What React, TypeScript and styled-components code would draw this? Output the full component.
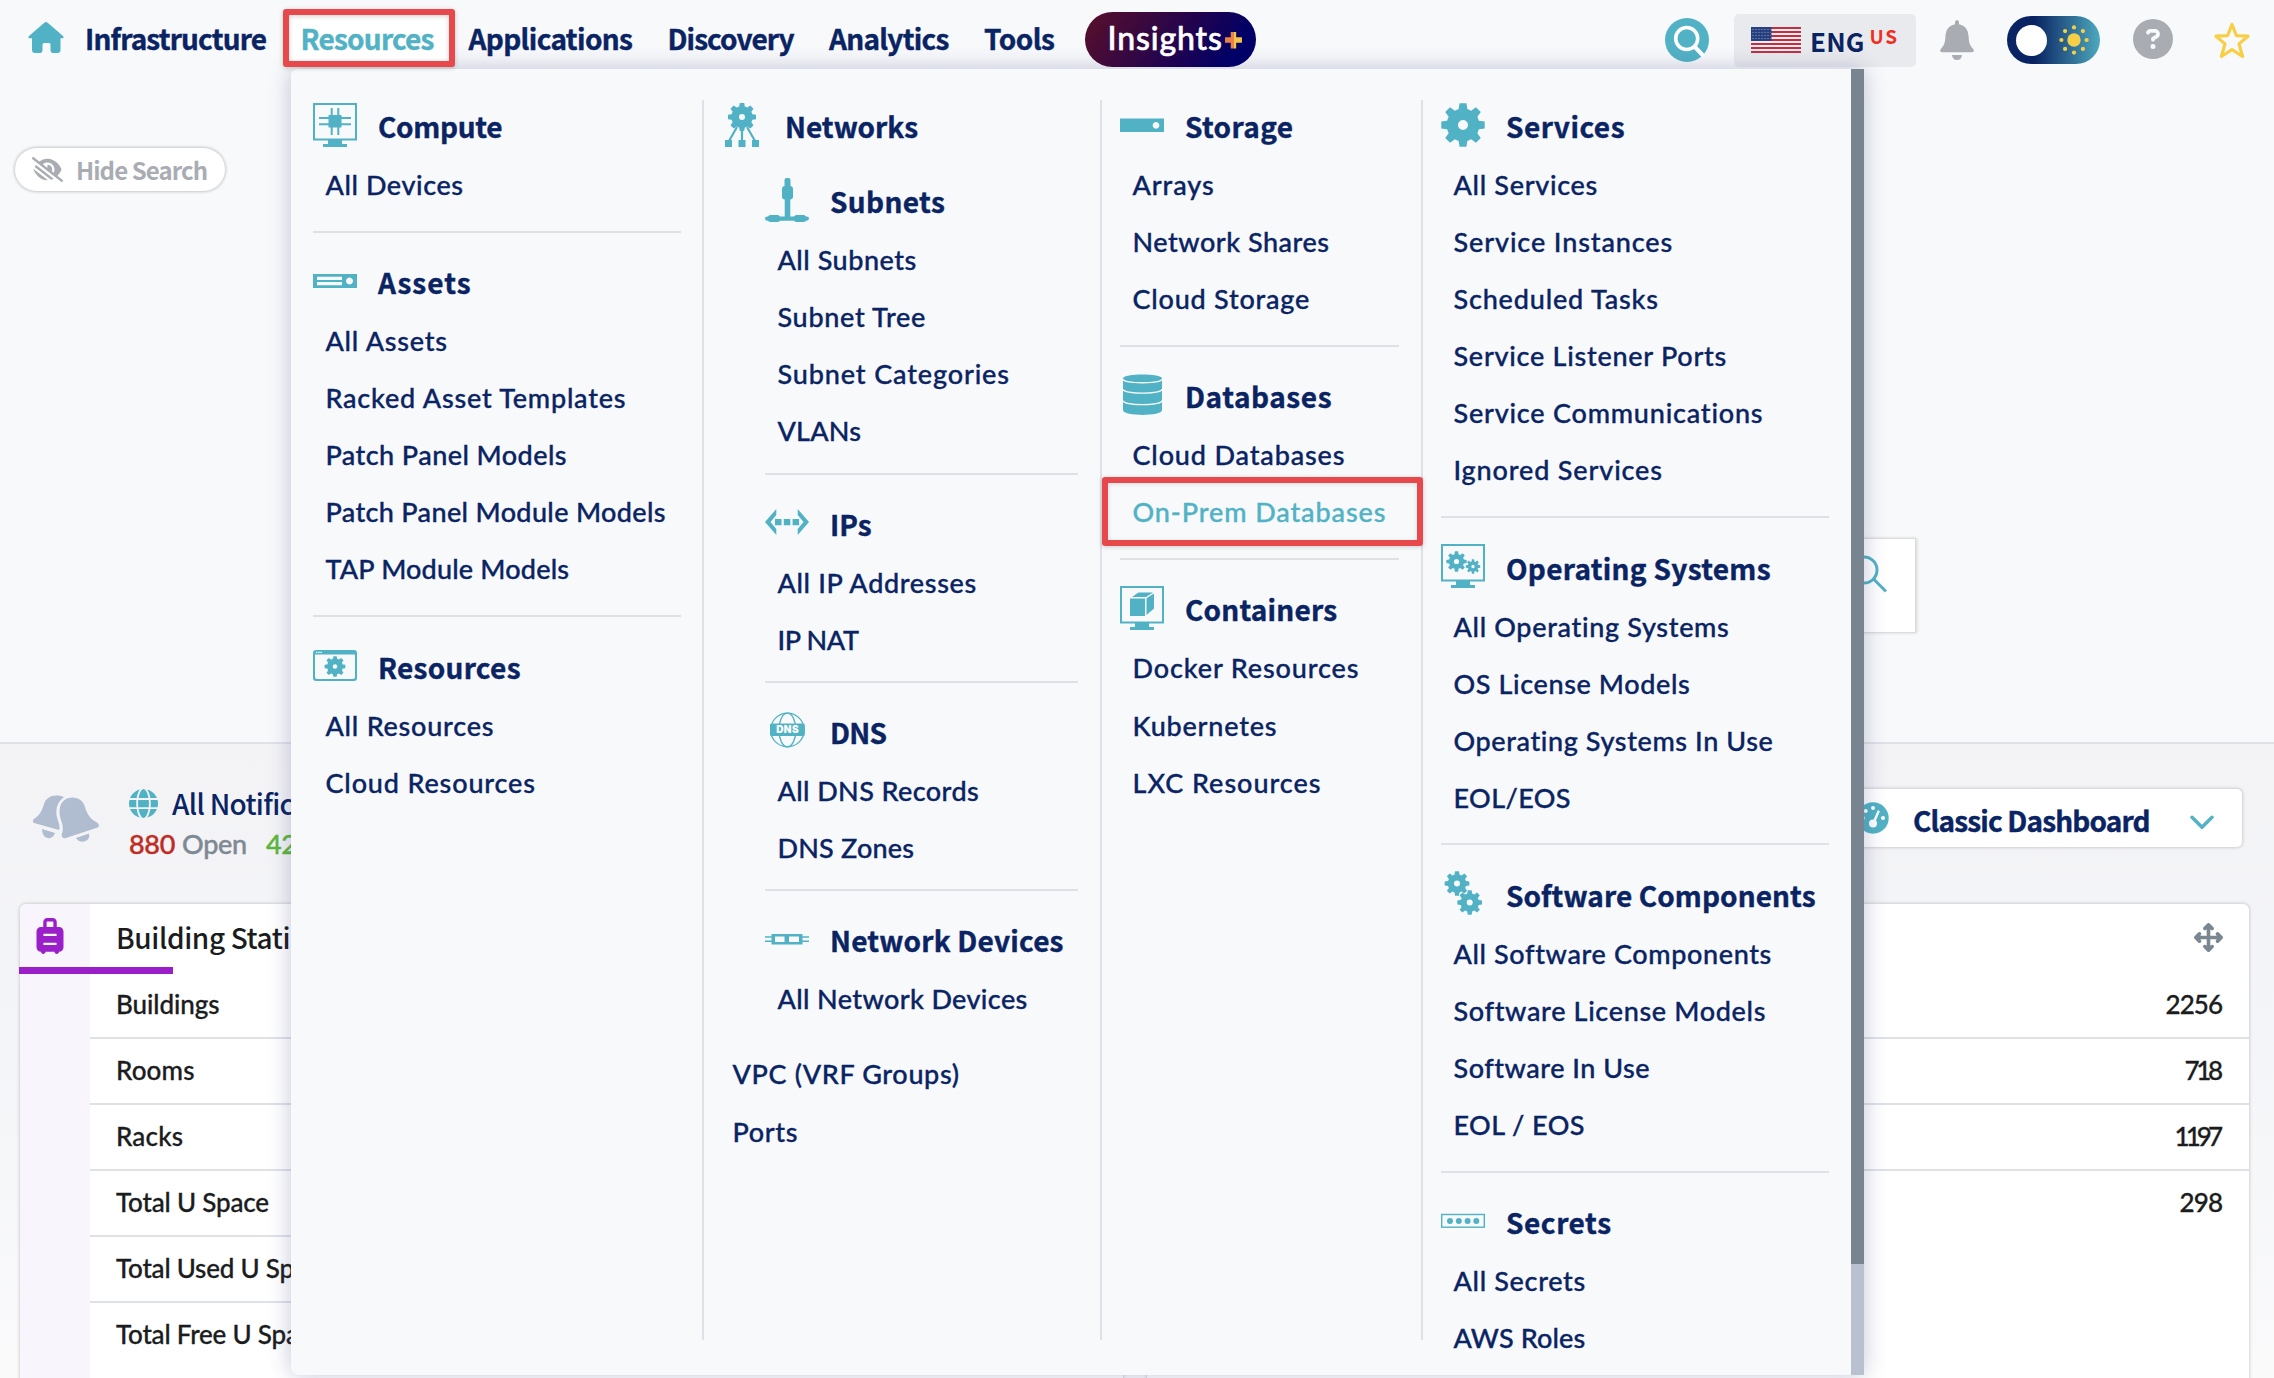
import React, { useLayoutEffect, useRef, useState } from "react";
import styled, { createGlobalStyle } from "styled-components";
import {
  FaArrowsUpDownLeftRight,
  FaCircleQuestion,
  FaEyeLowVision,
  FaGlobe,
  FaSuitcaseRolling,
} from "react-icons/fa6";

const teal = "#52b2c5";
const navy = "#0a2463";
const line = "#dfe1e7";
const ink = "#1b1c1e";
const display = `"Noto Sans CJK SC", "Noto Sans", sans-serif`;
const body = `Lato, "Open Sans", sans-serif`;

const GlobalStyle = createGlobalStyle`
  * { box-sizing: border-box; }
  body { margin: 0; background: #f8f9fb; font-family: ${body}; color: ${ink}; overflow: hidden; }
  svg { display: block; flex: none; }
`;

/* ---------- text that tracks out to a given measure ---------- */

const Run = styled.span`
  display: inline-block;
  white-space: pre;
`;

function Tracked({ text, w }: { text: string; w: number }) {
  const ref = useRef<HTMLSpanElement>(null);
  const [gap, setGap] = useState(0);
  useLayoutEffect(() => {
    const el = ref.current;
    if (!el) return;
    el.style.letterSpacing = "0px";
    const natural = el.getBoundingClientRect().width;
    const next = (w + 1.5 - natural) / Math.max(1, text.length - 1);
    el.style.letterSpacing = next + "px";
    setGap(next);
  }, [text, w]);
  return (
    <Run ref={ref} style={{ letterSpacing: gap, marginRight: -gap }}>
      {text}
    </Run>
  );
}

/* ---------- drawings ---------- */

function gearPath(cx: number, cy: number, ro: number, ri: number, hole: number, teeth = 8) {
  const step = (Math.PI * 2) / teeth;
  const pts: string[] = [];
  for (let i = 0; i < teeth; i++) {
    const a = i * step - Math.PI / 2;
    [
      [ri, -0.34],
      [ro, -0.2],
      [ro, 0.2],
      [ri, 0.34],
    ].forEach(([r, o]) => {
      const t = a + o * step;
      pts.push(`${(cx + r * Math.cos(t)).toFixed(2)} ${(cy + r * Math.sin(t)).toFixed(2)}`);
    });
  }
  return `M${pts.join("L")}Z M${cx - hole} ${cy}a${hole} ${hole} 0 1 0 ${hole * 2} 0a${hole} ${hole} 0 1 0 ${-hole * 2} 0Z`;
}

const Glyph = ({ children }: { children: React.ReactNode }) => (
  <svg width="44" height="44" viewBox="0 0 44 44" fill={teal}>
    {children}
  </svg>
);

const Monitor = () => (
  <>
    <rect x="1" y="1" width="42" height="35.5" fill="none" stroke={teal} strokeWidth="2" />
    <path d="M15 37h14v4h5v3H10v-3h5z" />
  </>
);

const icons: Record<string, React.ReactNode> = {
  compute: (
    <Glyph>
      <Monitor />
      <rect x="15.5" y="12" width="13" height="12.5" />
      <path d="M18.7 5v27M25.3 5v27M6 15h32M6 21.2h32" stroke={teal} strokeWidth="2" />
    </Glyph>
  ),
  assets: (
    <Glyph>
      <path fillRule="evenodd" d="M0 15h44v14H0z M4 17.8v3.2h25v-3.2z M4 23v3.2h25V23z M36.5 18.5a3.5 3.5 0 1 0 .01 0z" />
    </Glyph>
  ),
  resources: (
    <Glyph>
      <path fillRule="evenodd" d="M3 7h38q3 0 3 3v25q0 3-3 3H3q-3 0-3-3V10q0-3 3-3z M2 11.5V34q0 2 2 2h36q2 0 2-2V11.5z" />
      <path d="M3 9.3h6" stroke="#fff" strokeWidth="1.2" strokeDasharray="1.4 .8" />
      <path fillRule="evenodd" d={gearPath(22, 23.5, 10.5, 8, 2.3)} />
    </Glyph>
  ),
  networks: (
    <Glyph>
      <path fillRule="evenodd" d={gearPath(22, 14, 14.2, 10.8, 3)} />
      <path d="M17 24L9 38M22 25v13M27 24l8 14" stroke={teal} strokeWidth="2.2" />
      <path d="M5 37h7v7H5zM18.5 37h7v7h-7zM32 37h7v7h-7z" />
    </Glyph>
  ),
  subnets: (
    <Glyph>
      <rect x="19.5" y="0" width="6" height="12" rx="2" />
      <rect x="17" y="8" width="11" height="13.5" rx="3" />
      <rect x="19.7" y="18" width="5.6" height="22" />
      <rect x="0" y="38.5" width="44" height="4.2" rx="2.1" />
      <rect x="3" y="37" width="12" height="7" rx="2.5" />
      <rect x="29" y="37" width="12" height="7" rx="2.5" />
    </Glyph>
  ),
  ips: (
    <Glyph>
      <path d="M11.3 9v6L5.5 22l5.800 7v6L0 22z M32.7 9v6l5.800 7-5.800 7v6L44 22z" />
      <path d="M10 19h6.500v6.300H10zM18.800 19h6.500v6.300h-6.500zM27.600 19h6.500v6.300h-6.500z" />
    </Glyph>
  ),
  dns: (
    <Glyph>
      <g fill="none" stroke={teal} strokeWidth="1.3">
        <circle cx="22.4" cy="22" r="16.8" />
        <ellipse cx="22.4" cy="22" rx="8.5" ry="16.8" />
      </g>
      <rect x="5" y="15.5" width="34.8" height="12.5" rx="1.5" />
      <text x="22.6" y="25.4" textAnchor="middle" fontFamily="Inter, sans-serif" fontSize="10" fontWeight="900" letterSpacing=".4" fill="#fff">
        DNS
      </text>
    </Glyph>
  ),
  devices: (
    <Glyph>
      <path fillRule="evenodd" d="M6.500 17h31v10.500h-31z M10 19.500v5.500h9.500v-5.500z M24 19.500v5.500h10v-5.500z" />
      <path d="M0 20h7M0 24.200h7M37 20h7M37 24.200h7" stroke={teal} strokeWidth="1.5" />
    </Glyph>
  ),
  storage: (
    <Glyph>
      <path fillRule="evenodd" d="M0 15.500h44v13.500H0z M36 19a3.400 3.400 0 1 0 .01 0z" />
    </Glyph>
  ),
  databases: (
    <Glyph>
      <path d="M3 5.500C3 .3 42 .3 42 5.500V37c0 6.500-39 6.500-39 0z" />
      <g fill="none" stroke="#f8f9fb" strokeWidth="1.3">
        <path d="M3 6c0 5 39 5 39 0M3 16c0 5.500 39 5.500 39 0M3 27.500c0 5.500 39 5.500 39 0" />
      </g>
    </Glyph>
  ),
  containers: (
    <Glyph>
      <Monitor />
      <path d="M10 12.500h15v17.500H10zM12 11l6.500-4.500H33L26 11zM26.500 12.300L34 7.500v15L26.500 29z" />
    </Glyph>
  ),
  services: (
    <Glyph>
      <path fillRule="evenodd" d={gearPath(22, 22, 22, 16.5, 5)} />
    </Glyph>
  ),
  os: (
    <Glyph>
      <Monitor />
      <path fillRule="evenodd" d={gearPath(15.5, 17.5, 10.3, 7.6, 2.6)} />
      <path fillRule="evenodd" d={gearPath(32, 22.5, 7.3, 5.3, 1.7)} />
    </Glyph>
  ),
  software: (
    <Glyph>
      <path fillRule="evenodd" d={gearPath(16, 12.5, 12.5, 9.3, 3)} />
      <path fillRule="evenodd" d={gearPath(28.7, 31.5, 12.5, 9.3, 3)} />
    </Glyph>
  ),
  secrets: (
    <Glyph>
      <rect x=".7" y="15.5" width="42.6" height="12.7" fill="none" stroke={teal} strokeWidth="1.4" />
      <circle cx="9" cy="22" r="3" />
      <circle cx="17.8" cy="22" r="3" />
      <circle cx="26.6" cy="22" r="3" />
      <circle cx="35.3" cy="22" r="3" />
    </Glyph>
  ),
};

const HomeIcon = () => (
  <svg width="36" height="31" viewBox="0 0 36 31" fill={teal}>
    <path d="M16.300.7q1.700-1.200 3.400 0L35 14q1.500 2.300-1 2.300h-1.500V28q0 3-3 3H25q-2.500 0-2.500-3v-5.500q0-1.500-1.500-1.500h-5q-1.500 0-1.500 1.500V28q0 3-2.500 3H7q-3 0-3-3V16.300H2Q-.5 16.300 1 14z" />
  </svg>
);

const SearchBadge = () => (
  <svg width="44" height="44" viewBox="0 0 44 44">
    <circle cx="22" cy="22" r="22" fill={teal} />
    <circle cx="21.7" cy="20.5" r="11" fill="none" stroke="#fff" strokeWidth="3.6" />
    <path d="M29.500 28.500L38.500 38" stroke="#fff" strokeWidth="4" />
  </svg>
);

const Flag = () => (
  <svg width="50" height="26" viewBox="0 0 50 26">
    <rect width="50" height="26" fill="#f7e9ec" />
    {[0, 1, 2, 3, 4, 5, 6].map((i) => (
      <rect key={i} y={i * 4} width="50" height="2" fill="#bd3145" />
    ))}
    <rect width="20.5" height="14" fill="#27407f" />
    {[2, 5, 8, 11].map((y) => (
      <path key={y} d={`M1.5 ${y + 0.5}H20`} stroke="#8d9cc4" strokeWidth="1" strokeDasharray="1 2" />
    ))}
  </svg>
);

const BellIcon = () => (
  <svg width="34" height="40" viewBox="0 0 34 40" fill="#a9adb3">
    <path d="M17 0q2 0 2 2.500v1.700c7 1.300 9.300 6.500 9.600 12.500.3 6 1.400 9 4.600 12.300 1.300 2 .6 3.300-1.200 3.300H2c-1.800 0-2.500-1.300-1.200-3.300 3.200-3.300 4.300-6.300 4.600-12.300C5.700 10.700 8 5.500 15 4.200V2.500Q15 0 17 0z" />
    <path d="M12 35h10q-.5 5-5 5t-5-5z" />
  </svg>
);

const Sun = () => (
  <svg width="30" height="30" viewBox="0 0 30 30" fill="#f7cf46">
    <circle cx="15" cy="15" r="6.7" />
    {[0, 1, 2, 3, 4, 5, 6, 7].map((i) => (
      <circle
        key={i}
        cx={15 + 12.6 * Math.cos((i * Math.PI) / 4)}
        cy={15 + 12.6 * Math.sin((i * Math.PI) / 4)}
        r="2.1"
      />
    ))}
  </svg>
);

const StarIcon = () => (
  <svg width="36" height="37" viewBox="0 0 36 37" fill="none" stroke="#f7cf46" strokeWidth="3.2" strokeLinejoin="round">
    <path d="M18 2.500l4.400 11.200 11.600.5-9 7.700 3.600 12.600L18 27.600 7.400 34.500 11 21.900l-9-7.700 11.600-.5z" />
  </svg>
);

const BellsIcon = () => (
  <svg width="66" height="48" viewBox="0 0 66 48" fill="#b0bdd1">
    <path d="M31 2C21-1.500 13.500 1.500 11 9 8.500 17 6.500 20 1.500 23.500c-2.300 2-2 4 .3 4.700L26 35c2-4-1.500-9-2.500-15C22.700 12 25.500 6 31 2z" />
    <path d="M34 3.500C42 .5 50 4 52 12c2.500 8.500 6 12.500 12 15.500 2.500 1.700 2.500 4.500 0 5.300L33 43c-3 .8-5-.7-4.200-4 1.700-5 1.200-8-.8-14-3-9-1.500-18 6-21.500z" />
    <path d="M9 34l13 4q-2 6-7.500 5Q9 41.500 9 34zM43 43l13-4.500q1.500 5.500-4 7.700Q46 48 43 43z" />
  </svg>
);

const GaugeIcon = () => (
  <svg width="32" height="32" viewBox="0 0 32 32">
    <circle cx="16" cy="16" r="15.7" fill={teal} />
    <g fill="#fff">
      <circle cx="16" cy="6" r="2" />
      <circle cx="8.8" cy="9" r="2" />
      <circle cx="5.8" cy="16" r="2" />
      <circle cx="26" cy="16" r="2" />
      <circle cx="16" cy="21.5" r="4" />
    </g>
    <path d="M16.500 21L21.500 9.500" stroke="#fff" strokeWidth="2.4" strokeLinecap="round" />
  </svg>
);

const ChevronIcon = () => (
  <svg width="24" height="15" viewBox="0 0 24 15" fill="none" stroke={teal} strokeWidth="3.4" strokeLinecap="round" strokeLinejoin="round">
    <path d="M2 2.200l10 10 10-10" />
  </svg>
);

const Magnifier = () => (
  <svg width="40" height="40" viewBox="0 0 40 40" fill="none" stroke={teal} strokeWidth="3">
    <circle cx="16" cy="16" r="13" />
    <path d="M25.500 25l12.500 12.500" />
  </svg>
);

/* ---------- shell ---------- */

const Page = styled.div`
  position: relative;
  width: 2274px;
  height: 1378px;
  overflow: hidden;
  display: flex;
  flex-direction: column;
  background: #f8f9fb;
`;

const TopBar = styled.header`
  height: 78px;
  flex: none;
  display: flex;
  justify-content: space-between;
  align-items: flex-start;
  padding: 9px 24px 0 28px;
`;

const Nav = styled.nav`
  display: flex;
  align-items: center;
  height: 58px;
`;

const HomeLink = styled.a`
  display: flex;
  margin: 0 21px 2px 0;
`;

const NavLink = styled.a`
  margin-right: 34.5px;
  font: 700 28px/58px ${display};
  -webkit-text-stroke: 0.4px currentColor;
  color: ${navy};
  height: 58px;
  display: block;
`;

const ActiveNavLink = styled(NavLink)`
  margin: 0 13px 0 -18px;
  padding: 0 15px 0 11px;
  border: 6px solid #e7484c;
  border-radius: 3px;
  line-height: 46px;
  color: ${teal};
  background: #fff;
  box-shadow: 0 1px 5px rgba(0, 0, 0, 0.2), inset 0 1px 5px rgba(0, 0, 0, 0.2);
  position: relative;
  z-index: 6;
`;

const InsightsPill = styled.a`
  display: flex;
  align-items: center;
  gap: 3px;
  width: 171px;
  height: 55px;
  margin: 3px 0 0 -4px;
  padding-left: 22px;
  border-radius: 28px;
  background: linear-gradient(125deg, #5a1029 0%, #22034f 55%, #000066 85%);
  color: #fff;
  font: 500 32px/50px ${body};
  -webkit-text-stroke: 0.6px currentColor;
  position: relative;
  z-index: 6;
`;

const InsightsName = styled.span`
  padding-bottom: 4px;
`;

const Plus = styled.span`
  width: 17px;
  height: 17px;
  margin: 1px 0 0 0;
  background: linear-gradient(90deg, #e9804a 50%, #f4c545 50%);
  clip-path: polygon(34% 0, 66% 0, 66% 34%, 100% 34%, 100% 66%, 66% 66%, 66% 100%, 34% 100%, 34% 66%, 0 66%, 0 34%, 34% 34%);
`;

const Tools = styled.div`
  display: flex;
  align-items: center;
  height: 62px;
`;

const LangBox = styled.div`
  display: flex;
  align-items: center;
  width: 182px;
  height: 53px;
  margin: 0 24px 0 25px;
  padding-left: 17px;
  border-radius: 5px;
  background: #e9eaee;
  font: 700 26px/53px ${display};
  color: ${navy};
`;

const LangName = styled.span`
  margin-left: 9px;
`;

const Region = styled.sup`
  margin: 0 0 8px 5px;
  font: 700 19px/20px ${display};
  color: #f0301f;
`;

const Toggle = styled.div`
  display: flex;
  align-items: center;
  justify-content: space-between;
  width: 93px;
  height: 48px;
  margin: 0 33px;
  padding: 0 11px 0 9px;
  border-radius: 24px;
  background: linear-gradient(90deg, ${navy} 30%, ${teal} 105%);
`;

const Knob = styled.span`
  width: 31px;
  height: 31px;
  border-radius: 50%;
  background: #fff;
`;

const Help = styled.div`
  display: flex;
  margin: 0 41px 3px 0;
`;

/* ---------- search area ---------- */

const SearchArea = styled.section`
  height: 666px;
  flex: none;
  display: flex;
  flex-direction: column;
  align-items: flex-start;
  border-bottom: 2px solid ${line};
  padding: 70px 0 0 15px;
`;

const HideSearch = styled.button`
  display: flex;
  align-items: center;
  width: 210px;
  height: 43px;
  padding: 0 0 0 17px;
  gap: 13px;
  border: 0;
  border-radius: 22px;
  background: #fff;
  box-shadow: 0 0 3px 1px rgba(0, 0, 0, 0.2);
  color: #a9adb3;
  font: 700 24px/40px ${display};
`;

const SearchField = styled.div`
  display: flex;
  justify-content: flex-end;
  width: 1575px;
  height: 95px;
  margin: 347px 0 0 326px;
  padding: 15px 27px 0 0;
  background: #fff;
  border: 1px solid #dcdcdd;
  box-shadow: 1px 0 3px rgba(0, 0, 0, 0.15);
`;

/* ---------- dashboard ---------- */

const Dashboard = styled.main`
  flex: 1;
  min-height: 0;
  background: linear-gradient(#f3f3f6 0%, #f4f5f8 45%, #fafafb 100%);
  padding: 45px 25px 0 20px;
  display: flex;
  flex-direction: column;
`;

const DashHead = styled.div`
  display: flex;
  justify-content: space-between;
  height: 115px;
  padding-right: 7px;
  flex: none;
`;

const Notices = styled.div`
  display: flex;
  padding: 6px 0 0 13px;
  gap: 30px;
`;

const NoticeTitle = styled.div`
  display: flex;
  align-items: center;
  gap: 14px;
  height: 40px;
  margin-top: -12px;
  font: 500 28px/36px ${display};
  color: ${navy};
`;

const Counts = styled.div`
  display: flex;
  gap: 7px;
  height: 40px;
  padding-top: 1px;
  font: 500 27px/40px ${body};
  -webkit-text-stroke: 0.4px currentColor;
  letter-spacing: -0.3px;
  color: #7d8993;
`;

const Count = styled.span<{ $tone: string; $lead?: boolean }>`
  color: ${(p) => p.$tone};
  margin-left: ${(p) => (p.$lead ? "12px" : "0")};
`;

const BoardSelect = styled.div`
  display: flex;
  align-items: center;
  width: 420px;
  height: 58px;
  padding: 0 28px 0 35px;
  border-radius: 5px;
  background: #fff;
  box-shadow: 0 0 3px 1px rgba(0, 0, 0, 0.16);
  font: 700 28px/56px ${display};
  color: ${navy};

  svg:last-child {
    margin-top: 8px;
  }
`;

const BoardName = styled.span`
  flex: 1;
  margin-left: 24px;
  padding-top: 3px;
  -webkit-text-stroke: 0.4px currentColor;
`;

const Cards = styled.div`
  display: grid;
  grid-template-columns: 1fr 1fr;
  gap: 24px;
  flex: 1;
  min-height: 0;
`;

const Card = styled.section`
  display: flex;
  height: 560px;
  border-radius: 6px;
  background: #fff;
  box-shadow: 0 0 3px 1px rgba(0, 0, 0, 0.15);
`;

const CardRail = styled.div`
  width: 70px;
  flex: none;
  padding: 14px 0 0 12px;
  border-radius: 6px 0 0 6px;
  background: #f9f5fd;
  color: #9b1fc9;
`;

const Accent = styled.div`
  width: 154px;
  height: 7px;
  margin: 13px 0 0 -13px;
  position: relative;
  background: #9b1fc9;
`;

const CardBody = styled.div`
  flex: 1;
`;

const CardHead = styled.div`
  display: flex;
  align-items: center;
  justify-content: space-between;
  height: 69px;
  padding: 0 26px 2px 26px;
  font: 500 28px/60px ${display};
  color: #7a8791;
`;

const CardTitle = styled.span`
  padding-bottom: 2px;
  color: ${ink};
`;

const StatRow = styled.div<{ $last?: boolean }>`
  display: flex;
  justify-content: space-between;
  height: 66px;
  padding: 0 26px 0 26px;
  border-bottom: 2px solid ${(p) => (p.$last ? "transparent" : line)};
  font: 500 26px/62px ${body};
  -webkit-text-stroke: 0.3px currentColor;
`;

/* ---------- mega menu ---------- */

const MegaMenu = styled.div`
  position: absolute;
  left: 291px;
  top: 69px;
  width: 1573px;
  height: 1306px;
  display: flex;
  border-radius: 6px 0 0 8px;
  background: #f8f9fb;
  box-shadow: 0 0 22px rgba(60, 70, 130, 0.3);
  z-index: 5;
`;

const Column = styled.div<{ $w: number; $pad: string }>`
  width: ${(p) => p.$w}px;
  height: 1240px;
  margin-top: 31px;
  padding: ${(p) => p.$pad};
  border-right: 2px solid ${line};

  &:nth-child(4) {
    border-right-color: transparent;
  }

  & > :first-child {
    margin-top: -3px;
  }
`;

const Track = styled.div`
  width: 13px;
  background: #b9c0cf;
`;

const Thumb = styled.div`
  height: 1195px;
  background: #788590;
`;

const Heading = styled.div`
  display: flex;
  align-items: center;
  gap: 21px;
  height: 59px;
  font: 700 28px/57px ${display};
  -webkit-text-stroke: 0.4px currentColor;
  color: ${navy};

  svg {
    margin-bottom: 4px;
    -webkit-text-stroke: 0;
  }
`;

const Item = styled.a<{ $active?: boolean }>`
  display: block;
  height: 57.1px;
  padding-left: 12.5px;
  font: 500 27px/57px ${body};
  -webkit-text-stroke: 0.35px currentColor;
  color: ${(p) => (p.$active ? teal : navy)};
`;

const Highlight = styled.div`
  width: 321px;
  height: 69px;
  margin: -6px 0 -5.9px -18px;
  padding-left: 12px;
  border: 6px solid #e7484c;
  border-radius: 3px;
  box-shadow: 0 1px 5px rgba(0, 0, 0, 0.18), inset 0 1px 5px rgba(0, 0, 0, 0.12);
  position: relative;
`;

const Rule = styled.hr`
  height: 2px;
  margin: 17.5px 0 20.5px;
  border: 0;
  background: ${line};
`;

const Indented = styled.div`
  padding: 16px 0 18px 45px;

  ${Rule} {
    margin: 13.2px 0 20px;
  }
`;

type Entry = [string, number];
type Group = { icon: string; title: Entry; items: Entry[] };

const col1: Group[] = [
  { icon: "compute", title: ["Compute", 123], items: [["All Devices", 136]] },
  {
    icon: "assets",
    title: ["Assets", 91],
    items: [
      ["All Assets", 120],
      ["Racked Asset Templates", 298.5],
      ["Patch Panel Models", 239.5],
      ["Patch Panel Module Models", 338.5],
      ["TAP Module Models", 242],
    ],
  },
  { icon: "resources", title: ["Resources", 141], items: [["All Resources", 166.5], ["Cloud Resources", 208]] },
];

const col2: Group[] = [
  {
    icon: "subnets",
    title: ["Subnets", 113.3],
    items: [["All Subnets", 137.3], ["Subnet Tree", 146.3], ["Subnet Categories", 230], ["VLANs", 82]],
  },
  { icon: "ips", title: ["IPs", 40], items: [["All IP Addresses", 197.3], ["IP NAT", 80]] },
  { icon: "dns", title: ["DNS", 55.5], items: [["All DNS Records", 199.7], ["DNS Zones", 135]] },
  { icon: "devices", title: ["Network Devices", 232], items: [["All Network Devices", 248.3]] },
];

const col3: Group[] = [
  { icon: "storage", title: ["Storage", 106.5], items: [["Arrays", 79.7], ["Network Shares", 195], ["Cloud Storage", 175.3]] },
  { icon: "databases", title: ["Databases", 145], items: [["Cloud Databases", 210.5], ["On-Prem Databases", 251.5]] },
  {
    icon: "containers",
    title: ["Containers", 150.5],
    items: [["Docker Resources", 224.5], ["Kubernetes", 142.5], ["LXC Resources", 186.5]],
  },
];

const col4: Group[] = [
  {
    icon: "services",
    title: ["Services", 117],
    items: [
      ["All Services", 142.3],
      ["Service Instances", 217.3],
      ["Scheduled Tasks", 203],
      ["Service Listener Ports", 271.3],
      ["Service Communications", 308],
      ["Ignored Services", 207],
    ],
  },
  {
    icon: "os",
    title: ["Operating Systems", 263],
    items: [
      ["All Operating Systems", 274.3],
      ["OS License Models", 234.7],
      ["Operating Systems In Use", 318.3],
      ["EOL/EOS", 115.5],
    ],
  },
  {
    icon: "software",
    title: ["Software Components", 308],
    items: [
      ["All Software Components", 315.7],
      ["Software License Models", 309.7],
      ["Software In Use", 194],
      ["EOL / EOS", 129.5],
    ],
  },
  { icon: "secrets", title: ["Secrets", 103.5], items: [["All Secrets", 130.3], ["AWS Roles", 130.3]] },
];

function MenuItem({ entry }: { entry: Entry }) {
  const [text, w] = entry;
  if (text === "On-Prem Databases") {
    return (
      <Highlight>
        <Item $active>
          <Tracked text={text} w={w} />
        </Item>
      </Highlight>
    );
  }
  return (
    <Item>
      <Tracked text={text} w={w} />
    </Item>
  );
}

function Groups({ groups }: { groups: Group[] }) {
  return (
    <>
      {groups.map((g, i) => (
        <React.Fragment key={g.icon}>
          {i > 0 && <Rule />}
          <Heading>
            {icons[g.icon]}
            <Tracked text={g.title[0]} w={g.title[1]} />
          </Heading>
          {g.items.map((e) => (
            <MenuItem key={e[0]} entry={e} />
          ))}
        </React.Fragment>
      ))}
    </>
  );
}

const leftStats: Entry[] = [
  ["Buildings", 102],
  ["Rooms", 77],
  ["Racks", 65.5],
  ["Total U Space", 151.5],
  ["Total Used U Space", 215],
  ["Total Free U Space", 207],
];

const rightStats: [string, string, number][] = [
  ["Devices", "2256", 56],
  ["Virtual", "718", 37],
  ["Physical", "1197", 47],
  ["Clusters", "298", 42],
];

export default function App() {
  return (
    <Page>
      <GlobalStyle />
      <TopBar>
        <Nav>
          <HomeLink>
            <HomeIcon />
          </HomeLink>
          <NavLink>
            <Tracked text="Infrastructure" w={180.5} />
          </NavLink>
          <ActiveNavLink>
            <Tracked text="Resources" w={132.5} />
          </ActiveNavLink>
          <NavLink>
            <Tracked text="Applications" w={163} />
          </NavLink>
          <NavLink>
            <Tracked text="Discovery" w={125.5} />
          </NavLink>
          <NavLink>
            <Tracked text="Analytics" w={119} />
          </NavLink>
          <NavLink>
            <Tracked text="Tools" w={69.5} />
          </NavLink>
          <InsightsPill>
            <InsightsName>
              <Tracked text="Insights" w={113} />
            </InsightsName>
            <Plus />
          </InsightsPill>
        </Nav>
        <Tools>
          <SearchBadge />
          <LangBox>
            <Flag />
            <LangName>
              <Tracked text="ENG" w={53} />
            </LangName>
            <Region>
              <Tracked text="US" w={26} />
            </Region>
          </LangBox>
          <BellIcon />
          <Toggle>
            <Knob />
            <Sun />
          </Toggle>
          <Help>
            <FaCircleQuestion size={40} color="#a9adb3" />
          </Help>
          <StarIcon />
        </Tools>
      </TopBar>

      <SearchArea>
        <HideSearch>
          <FaEyeLowVision size={31} />
          <Tracked text="Hide Search" w={130.5} />
        </HideSearch>
        <SearchField>
          <Magnifier />
        </SearchField>
      </SearchArea>

      <Dashboard>
        <DashHead>
          <Notices>
            <BellsIcon />
            <div>
              <NoticeTitle>
                <FaGlobe size={29} color={teal} />
                <Tracked text="All Notifications" w={199} />
              </NoticeTitle>
              <Counts>
                <Count $tone="#c02c25">880</Count>
                <span>Open</span>
                <Count $tone="#5cb83c" $lead>
                  42
                </Count>
              </Counts>
            </div>
          </Notices>
          <BoardSelect>
            <GaugeIcon />
            <BoardName>
              <Tracked text="Classic Dashboard" w={236} />
            </BoardName>
            <ChevronIcon />
          </BoardSelect>
        </DashHead>
        <Cards>
          <Card>
            <CardRail>
              <FaSuitcaseRolling size={36} />
              <Accent />
            </CardRail>
            <CardBody>
              <CardHead>
                <CardTitle>
                  <Tracked text="Building Statistics" w={231} />
                </CardTitle>
              </CardHead>
              {leftStats.map(([label, w], i) => (
                <StatRow key={label} $last={i === 5}>
                  <Tracked text={label} w={w} />
                </StatRow>
              ))}
            </CardBody>
          </Card>
          <Card>
            <CardBody>
              <CardHead>
                <span />
                <FaArrowsUpDownLeftRight size={29} />
              </CardHead>
              {rightStats.map(([label, value, w], i) => (
                <StatRow key={label} $last={i === 3}>
                  <span />
                  <Tracked text={value} w={w} />
                </StatRow>
              ))}
            </CardBody>
          </Card>
        </Cards>
      </Dashboard>

      <MegaMenu>
        <Column $w={413} $pad="0 21px 0 22px">
          <Groups groups={col1} />
        </Column>
        <Column $w={398} $pad="0 22px 0 16px">
          <Heading>
            {icons.networks}
            <Tracked text="Networks" w={131.5} />
          </Heading>
          <Indented>
            <Groups groups={col2} />
          </Indented>
          <MenuItem entry={["VPC (VRF Groups)", 225]} />
          <MenuItem entry={["Ports", 63.5]} />
        </Column>
        <Column $w={321} $pad="0 22px 0 18px">
          <Groups groups={col3} />
        </Column>
        <Column $w={428} $pad="0 20px 0 18px">
          <Groups groups={col4} />
        </Column>
        <Track>
          <Thumb />
        </Track>
      </MegaMenu>
    </Page>
  );
}
